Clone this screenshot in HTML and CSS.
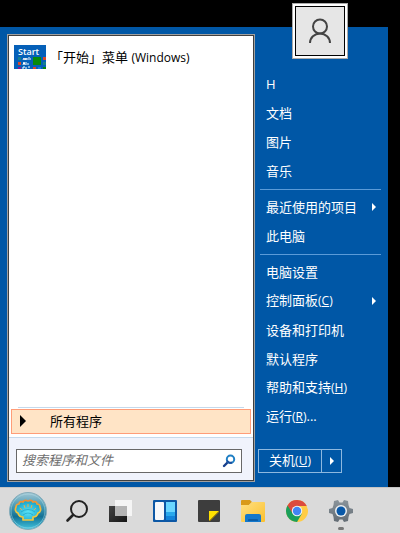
FILE: index.html
```html
<!DOCTYPE html>
<html lang="zh-CN">
<head>
  <meta charset="UTF-8">
  <meta name="viewport" content="width=device-width, initial-scale=1.0">
  <title>「开始」菜单</title>
  <link rel="stylesheet" href="styles.css">
</head>
<body>
  <main class="start-menu">
    <section class="programs">
      <div class="program-list">
        <a class="program" href="#">
          <svg class="program-icon" width="32" height="24" viewBox="0 0 32 24">
            <rect width="32" height="24" fill="#0560b8"/>
            <text class="tile-title" x="4" y="10">Start</text>
            <rect x="4" y="12" width="3" height="3" fill="#168090"/>
            <rect x="4" y="17" width="3" height="3" fill="#d8482c"/>
            <rect x="4" y="22" width="3" height="2" fill="#8b1590"/>
            <rect x="19" y="12" width="8" height="8" fill="#078a0b"/>
            <rect x="29" y="12" width="3" height="3" fill="#d8482c"/>
            <rect x="29" y="17" width="3" height="3" fill="#168090"/>
            <rect x="19" y="22" width="3" height="2" fill="#d8482c"/>
            <rect x="24" y="22" width="3" height="2" fill="#147be0"/>
            <rect x="29" y="22" width="3" height="2" fill="#078a0b"/>
            <path d="M9 15l1-2 1 2 1-2v2M13 13v2M15 12v3M16 14h1M9 20l1-3 1 3M12 17v3M14 18v2M9 24v-2h2M12 22v2M14 22h2" fill="none" stroke="#fff"/>
          </svg>
          <span>「开始」菜单 <small>(Windows)</small></span>
        </a>
      </div>
      <hr class="list-line">
      <button class="all-programs" type="button">
        <svg width="6" height="12" viewBox="0 0 6 12"><path d="M0 0l6 6-6 6z" fill="#000"/></svg>
        所有程序
      </button>
      <form class="search">
        <label class="search-box">
          <input type="text" placeholder="搜索程序和文件" aria-label="搜索程序和文件">
          <svg width="14" height="14" viewBox="0 0 14 14" fill="none">
            <path d="M6 8l-4 4" stroke="#173f8c" stroke-width="2.4" stroke-linecap="round"/>
            <circle cx="8.5" cy="5.2" r="3.7" stroke="#1f7fc4" stroke-width="2"/>
            <path d="M5 6.5a3.7 3.7 0 0 0 5 2" stroke="#1a4c9c" stroke-width="2"/>
          </svg>
        </label>
      </form>
    </section>

    <nav class="places">
      <a class="avatar" href="#" aria-label="H">
        <svg width="24" height="26" viewBox="0 0 24 26" fill="none" stroke="#444" stroke-width="2">
          <circle cx="12" cy="8.500" r="7"/>
          <path d="M2 25a10 9.500 0 0 1 20 0"/>
        </svg>
      </a>
      <a class="place" href="#">H</a>
      <a class="place" href="#">文档</a>
      <a class="place" href="#">图片</a>
      <a class="place" href="#">音乐</a>
      <hr>
      <a class="place more" href="#"><span>最近使用的项目</span></a>
      <a class="place" href="#">此电脑</a>
      <hr>
      <a class="place" href="#">电脑设置</a>
      <a class="place more" href="#"><span>控制面板<small>(<u>C</u>)</small></span></a>
      <a class="place" href="#">设备和打印机</a>
      <a class="place" href="#">默认程序</a>
      <a class="place" href="#"><span>帮助和支持<small>(<u>H</u>)</small></span></a>
      <a class="place" href="#"><span>运行<small>(<u>R</u>)</small>...</span></a>
      <div class="power">
        <button class="shutdown" type="button">关机<small>(<u>U</u>)</small></button>
        <button class="power-more" type="button" aria-label="更多"></button>
      </div>
    </nav>
  </main>

  <footer class="taskbar">
    <button class="start" type="button" aria-label="开始">
      <svg width="40" height="40" viewBox="0 0 40 40">
        <defs>
          <linearGradient id="orb" x1="0" y1="0" x2="0" y2="1">
            <stop offset="0" stop-color="#a3c6d3"/>
            <stop offset=".4" stop-color="#3f96b2"/>
            <stop offset=".65" stop-color="#137195"/>
            <stop offset="1" stop-color="#43c6e0"/>
          </linearGradient>
          <radialGradient id="shell" cx=".5" cy=".6" r=".6">
            <stop offset="0" stop-color="#5ce4f6"/>
            <stop offset="1" stop-color="#159fc8"/>
          </radialGradient>
          <linearGradient id="rim" x1="0" y1="0" x2="0" y2="1">
            <stop offset="0" stop-color="#f08a35"/>
            <stop offset=".6" stop-color="#f2c83c"/>
          </linearGradient>
        </defs>
        <circle cx="20" cy="20" r="18.5" fill="url(#orb)" stroke="#86adbb"/>
        <circle cx="20" cy="20" r="17" fill="none" stroke="#b6e0ea" stroke-opacity=".5"/>
        <path d="M15 29v-3q-4 0-5-4c-3-1-3-4-2-6 0-2 1-3 3-3 0-2 2-3 4-2 1-2 3-2 5-1 2-1 4-1 5 1 2-1 4 0 4 2 2 0 3 1 3 3 1 2 1 5-2 6q-1 4-5 4v3z" fill="url(#shell)" stroke="url(#rim)" stroke-width="1.7" stroke-linejoin="round"/>
        <path d="M12 17l2 2M16 14l1 3M20 13v3M24 14l-1 3M28 17l-2 2" stroke="#e9b04c"/>
        <path d="M13 21q7-5 14 0M15 24q5-4 10 0" fill="none" stroke="#0c8fb8" stroke-opacity=".5"/>
      </svg>
    </button>
    <button type="button" aria-label="搜索">
      <svg width="24" height="24" viewBox="0 0 24 24" fill="none" stroke="#222">
        <circle cx="14" cy="10" r="8" stroke-width="2"/>
        <path d="M8 16l-5.500 5.500" stroke-width="2.600" stroke-linecap="round"/>
      </svg>
    </button>
    <button type="button" aria-label="任务视图">
      <svg width="24" height="24" viewBox="0 0 24 24">
        <defs>
          <linearGradient id="pane" x1="0" y1="0" x2="1" y2="1"><stop stop-color="#444"/><stop offset="1" stop-color="#151515"/></linearGradient>
        </defs>
        <rect y="7" width="18" height="16" fill="url(#pane)"/>
        <rect x="6" y="1" width="17" height="16" fill="#fff" fill-opacity=".72"/>
        <rect x="6" y="7" width="12" height="10" fill="#aaa" fill-opacity=".6"/>
      </svg>
    </button>
    <button type="button" aria-label="小组件">
      <svg width="24" height="24" viewBox="0 0 24 24">
        <rect y="1" width="24" height="22" rx="1" fill="#0c57a5"/>
        <rect x="2" y="3" width="9" height="18" rx="1" fill="#f6f8fb"/>
        <rect x="13" y="3" width="9" height="10" fill="#69d6ff"/>
        <rect x="13" y="13" width="9" height="4" fill="#28a8ec"/>
        <rect x="13" y="17" width="9" height="4" fill="#1284db"/>
      </svg>
    </button>
    <button type="button" aria-label="便笺">
      <svg width="24" height="24" viewBox="0 0 24 24">
        <path d="M1 2a1 1 0 0 1 1-1h20a1 1 0 0 1 1 1v20a1 1 0 0 1-1 1H2a1 1 0 0 1-1-1z" fill="#3d3d3d"/>
        <path d="M12 12h10L12 22z" fill="#ffe000"/>
        <path d="M22 12v1l-9 9h-1z" fill="#b38d00"/>
      </svg>
    </button>
    <button type="button" aria-label="文件资源管理器">
      <svg width="24" height="24" viewBox="0 0 24 24">
        <defs>
          <linearGradient id="folder" x1="0" y1="0" x2="1" y2="1"><stop stop-color="#ffe082"/><stop offset="1" stop-color="#fbc02d"/></linearGradient>
        </defs>
        <path d="M0 2q0-1 1-1h8l2 2-3 3H0z" fill="#d99a18"/>
        <path d="M0 6h8l3-3h12q1 0 1 1v18q0 1-1 1H1q-1 0-1-1z" fill="url(#folder)"/>
        <path d="M4 23v-6q0-2 2-2h12q2 0 2 2v6z" fill="#1478cc"/>
        <path d="M8 20h8q1 0 1 1v1H7v-1q0-1 1-1z" fill="#0a5da8"/>
      </svg>
    </button>
    <button type="button" aria-label="Chrome">
      <svg width="24" height="24" viewBox="0 0 24 24">
        <circle cx="12" cy="12" r="11" fill="#fc4"/>
        <path d="M12 12L2.500 6.500A11 11 0 0 0 12 23l4.800-8.200z" fill="#1a9f5b"/>
        <path d="M12 7h9.800A11 11 0 0 0 2.500 6.500l5.200 8z" fill="#dc4b3e"/>
        <circle cx="12" cy="12" r="5.200" fill="#f4f4f4"/>
        <circle cx="12" cy="12" r="4.200" fill="#4285f4"/>
      </svg>
    </button>
    <button class="running" type="button" aria-label="设置">
      <svg width="24" height="24" viewBox="0 0 24 24">
        <defs>
          <linearGradient id="gear" x1="0" y1="0" x2="0" y2="1"><stop stop-color="#8a949b"/><stop offset="1" stop-color="#636c74"/></linearGradient>
        </defs>
        <path d="M5 2l4-1 1.500 2.500h3L15 1l4 1 .5 4 1 3 3.500 1v4l-3.500 1-1 3-.5 4-4 1-1.500-2.500h-3L9 23l-4-1-.5-4-1-3L0 14v-4l3.500-1 1-3z" fill="url(#gear)"/>
        <circle cx="12" cy="12" r="6" fill="#eceff1"/>
        <circle cx="12" cy="12" r="4.500" fill="#0858a8"/>
      </svg>
    </button>
  </footer>
</body>
</html>
```
FILE: styles.css
```css
* {
  box-sizing: border-box;
}

body {
  margin: 0;
  min-height: 100vh;
  display: flex;
  flex-direction: column;
  background-color: #000;
  font-family: "Open Sans", "Noto Sans CJK SC", sans-serif;
  font-size: 13px;
  line-height: 20px;
}

a {
  color: inherit;
  text-decoration: none;
}

button,
input {
  font: inherit;
  color: inherit;
}

button {
  padding: 0;
  border: none;
  background: none;
  cursor: pointer;
}

hr {
  width: auto;
  height: 1px;
  margin: 0;
  border: none;
}

small {
  font-size: 12px;
}

u {
  text-underline-offset: 1px;
}

.start-menu {
  flex: 1;
  display: flex;
  margin: 27px 12px 0 0;
  padding: 7px 0 5px 7px;
  background-color: #0057a6;
}

/* left column */
.programs {
  flex: 1;
  display: flex;
  flex-direction: column;
  border: 1px solid #a0a0a0;
  outline: 1px solid #404040;
  outline-offset: -2px;
  padding: 1px;
  background-color: #fff;
}

.program-list {
  flex: 1;
}

.program {
  display: flex;
  align-items: center;
  gap: 4px;
  padding: 9px 5px;
}

.tile-title {
  font-size: 9px;
  font-weight: 600;
  fill: #fff;
}

.list-line {
  margin: 0 9px 1px;
  background-color: #c5d9ec;
}

.all-programs {
  display: flex;
  align-items: center;
  gap: 24px;
  height: 25px;
  margin: 0 2px 3px;
  padding: 0 8px 2px;
  border: 1px solid #ff9d78;
  background-color: #ffe4c6;
}

.search {
  padding: 11px 11px 7px 7px;
  border-top: 1px solid #c5d9ec;
  background-color: #f0f3fc;
}

.search-box {
  display: flex;
  align-items: center;
  height: 24px;
  padding: 0 5px;
  border: 1px solid #686868;
  background-color: #fff;
}

.search-box input {
  flex: 1;
  min-width: 0;
  padding: 0 0 2px;
  border: none;
  outline: none;
  background: none;
  font-style: italic;
}

.search-box input::placeholder {
  color: #6d6d6d;
}

/* right column */
.places {
  position: relative;
  width: 133px;
  padding: 36px 7px 9px 5px;
  color: #fff;
}

.places hr {
  margin: 3px 0;
  background-color: #5b9bd8;
}

.avatar {
  position: absolute;
  top: -31px;
  left: 37px;
  width: 56px;
  height: 56px;
  display: flex;
  align-items: center;
  justify-content: center;
  border: 1px solid #aaa;
  outline: 1px solid #000;
  outline-offset: -4px;
  background-color: #e6e6e6;
  box-shadow: inset 0 0 0 2px #fff;
}

.place {
  display: flex;
  align-items: center;
  height: 29px;
  padding: 0 5px 2px 6px;
}

.more {
  justify-content: space-between;
}

.more::after,
.power-more::after {
  content: "";
  border: 4px solid transparent;
  border-left-color: #fff;
  border-right-width: 0;
}

.power {
  display: flex;
  width: 84px;
  height: 24px;
  margin: 17px 0 0 -2px;
  border: 1px solid #8db8df;
}

.shutdown {
  flex: 1;
  padding-bottom: 2px;
}

.power-more {
  display: flex;
  align-items: center;
  justify-content: center;
  width: 20px;
  border-left: 1px solid #8db8df;
}

/* taskbar */
.taskbar {
  display: flex;
  align-items: center;
  height: 46px;
  border-top: 1px solid #c4c4c4;
  background-color: #dadada;
}

.taskbar button {
  position: relative;
  width: 44px;
  height: 45px;
  display: flex;
  align-items: center;
  justify-content: center;
}

.taskbar .start {
  width: 55px;
}

.running::after {
  content: "";
  position: absolute;
  bottom: 3px;
  width: 6px;
  height: 3px;
  border-radius: 2px;
  background-color: #777;
}
```
